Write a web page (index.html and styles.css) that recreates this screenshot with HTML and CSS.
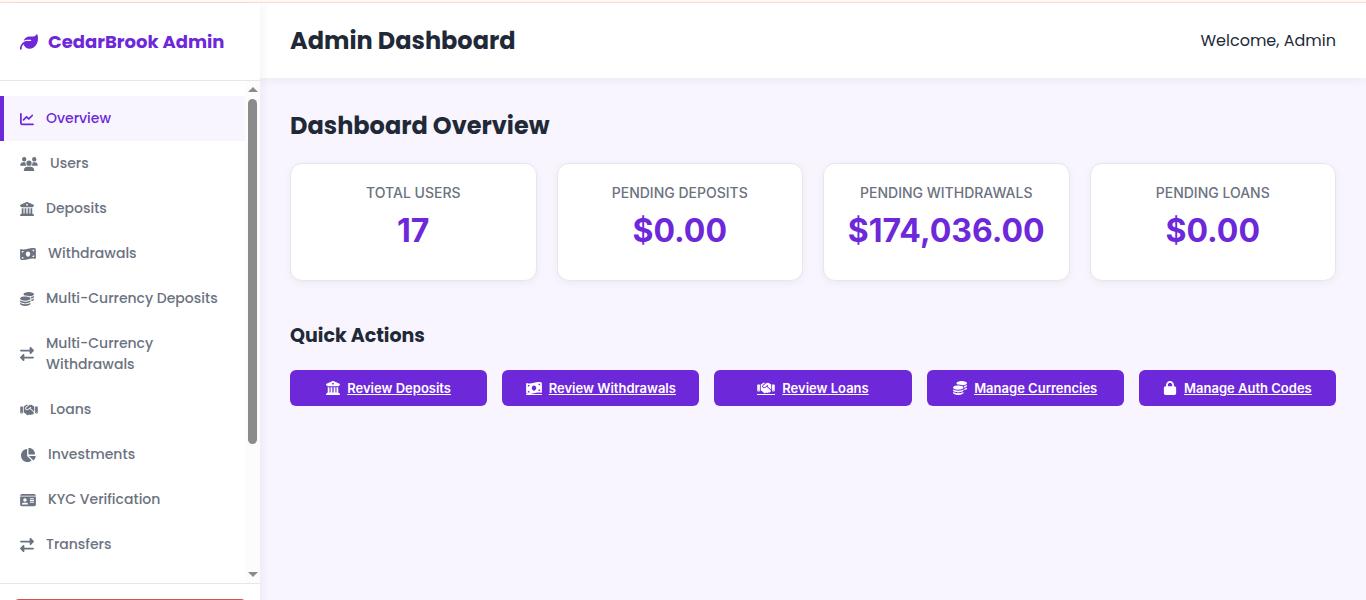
FILE: index.html
```
<!doctype html>
<html lang="en">
  <head>
    <meta charset="utf-8">
    <meta name="viewport" content="width=device-width, initial-scale=1">
    <title>Admin Dashboard - CedarBrook</title>
    <link rel="stylesheet" href="styles.css">
  </head>
  <body>

    <!-- icon sprite -->
    <svg class="sprite" aria-hidden="true">
      <symbol id="leaf" viewBox="0 0 512 512"><path d="M272 96c-78.6 0-145.1 51.5-167.7 122.5c33.6-17 71.5-26.5 111.7-26.5h88c8.8 0 16 7.2 16 16s-7.2 16-16 16H216c-16.6 0-32.7 1.9-48.3 5.4c-25.9 5.9-49.9 16.4-71.4 30.7C38.3 298.8 0 364.9 0 440v16c0 13.3 10.7 24 24 24s24-10.7 24-24V440c0-48.7 20.7-92.5 53.8-123.2C121.6 392.3 190.3 448 272 448l1 0c132.1-.7 239-130.9 239-291.4c0-42.6-7.5-83.1-21.1-119.6c-2.6-6.9-12.7-6.6-16.2-.1C455.9 72.1 418.7 96 376 96L272 96z"/></symbol>
      <symbol id="chart" viewBox="0 0 512 512"><path d="M64 64c0-17.7-14.3-32-32-32S0 46.3 0 64V400c0 44.2 35.8 80 80 80H480c17.7 0 32-14.3 32-32s-14.3-32-32-32H80c-8.8 0-16-7.2-16-16V64zm406.6 86.6c12.5-12.5 12.5-32.8 0-45.3s-32.8-12.5-45.3 0L320 210.7l-57.4-57.4c-12.5-12.5-32.8-12.5-45.3 0l-112 112c-12.5 12.5-12.5 32.8 0 45.3s32.8 12.5 45.3 0L240 221.3l57.4 57.4c12.5 12.5 32.8 12.5 45.3 0l128-128z"/></symbol>
      <symbol id="users" viewBox="0 0 640 512"><path d="M144 0a80 80 0 1 1 0 160A80 80 0 1 1 144 0zM512 0a80 80 0 1 1 0 160A80 80 0 1 1 512 0zM0 298.7C0 239.8 47.8 192 106.7 192h42.7c15.9 0 31 3.5 44.6 9.7c-1.3 7.2-1.9 14.7-1.9 22.3c0 38.2 16.8 72.5 43.3 96H21.3C9.6 320 0 310.4 0 298.7zM405.3 320h-.7c26.6-23.5 43.3-57.8 43.3-96c0-7.6-.7-15-1.9-22.3c13.6-6.3 28.7-9.7 44.6-9.7h42.7C592.2 192 640 239.8 640 298.7c0 11.8-9.6 21.3-21.3 21.3H405.3zM224 224a96 96 0 1 1 192 0 96 96 0 1 1-192 0zM128 485.3C128 411.7 187.7 352 261.3 352H378.7C452.3 352 512 411.7 512 485.3c0 14.7-11.9 26.7-26.7 26.7H154.7c-14.7 0-26.7-11.9-26.7-26.7z"/></symbol>
      <symbol id="bank" viewBox="0 0 512 512"><path d="M243.4 2.6l-224 96c-14 6-21.8 21-18.7 35.8S16.8 160 32 160v8c0 13.3 10.7 24 24 24H456c13.3 0 24-10.7 24-24v-8c15.2 0 28.3-10.7 31.3-25.6s-4.8-29.9-18.7-35.8l-224-96c-8-3.4-17.2-3.4-25.2 0zM128 224H64V420.3c-.6 .3-1.2 .7-1.8 1.1l-48 32c-11.7 7.8-17 22.4-12.9 35.9S17.9 512 32 512H480c14.1 0 26.5-9.2 30.6-22.7s-1.1-28.1-12.9-35.9l-48-32c-.6-.4-1.2-.7-1.8-1.1V224H384V416H344V224H280V416H232V224H168V416H128V224zM256 64a32 32 0 1 1 0 64 32 32 0 1 1 0-64z"/></symbol>
      <symbol id="money" viewBox="0 0 576 512"><path d="M0 112.5V422.3c0 18 10.1 35 27 41.3c87 32.5 174 10.3 261-11.9c79.8-20.3 159.6-40.7 239.3-18.9c23 6.3 48.7-9.5 48.7-33.4V89.7c0-18-10.1-35-27-41.3C462 15.9 375 38.1 288 60.3C208.2 80.6 128.4 100.9 48.7 79.1C25.6 72.8 0 88.6 0 112.5zM288 352c-44.2 0-80-43-80-96s35.8-96 80-96s80 43 80 96s-35.8 96-80 96zM64 352c35.3 0 64 28.7 64 64H64V352zm64-208c0 35.3-28.7 64-64 64V144h64zM512 304v64H448c0-35.3 28.7-64 64-64zM448 96h64v64c-35.3 0-64-28.7-64-64z"/></symbol>
      <symbol id="coins" viewBox="0 0 512 512"><path d="M512 80c0 18-14.3 34.6-38.4 48c-29.1 16.1-72.5 27.5-122.3 30.9c-3.7-1.8-7.4-3.5-11.3-5C300.6 137.4 248.2 128 192 128c-8.3 0-16.4 .2-24.5 .6l-1.1-.6C142.3 114.6 128 98 128 80c0-44.2 86-80 192-80S512 35.8 512 80zM160.7 161.1c10.2-.7 20.7-1.1 31.3-1.1c62.2 0 117.4 12.3 152.5 31.4C369.3 204.9 384 221.7 384 240c0 4-.7 7.9-2.1 11.7c-4.6 13.2-17 25.3-35 35.5c-.4 .2-.9 .5-1.3 .7c-35 19.4-90.8 32-153.6 32c-59.6 0-112.9-11.3-148.2-29.1c-1.9-.9-3.7-1.9-5.5-2.9C14.3 274.6 0 258 0 240c0-34.8 53.4-64.5 128-75.4c10.5-1.5 21.4-2.7 32.7-3.5zM416 240c0-21.9-10.6-39.9-24.1-53.4c28.3-4.4 54.2-11.4 76.2-20.5c16.3-6.8 31.5-15.2 43.9-25.5V176c0 19.3-16.5 37.1-43.8 50.9c-14.6 7.4-32.4 13.7-52.4 18.5c.1-1.8 .2-3.5 .2-5.3zm-32 96c0 18-14.3 34.6-38.4 48c-1.8 1-3.6 1.9-5.5 2.9C304.9 404.7 251.6 416 192 416c-62.8 0-118.6-12.6-153.6-32C14.3 370.6 0 354 0 336V300.6c12.5 10.3 27.6 18.7 43.9 25.5C83.4 342.6 135.8 352 192 352s108.6-9.4 148.1-25.9c7.8-3.2 15.3-6.9 22.4-10.9c6.1-3.4 11.8-7.2 17.2-11.2c1.5-1.1 2.9-2.3 4.3-3.4V336zm32 0V278.1c19-4.2 36.5-9.5 52.1-16c16.3-6.8 31.5-15.2 43.9-25.5V272c0 10.5-5 21-14.9 30.9c-16.3 16.3-45 29.7-81.3 38.4c.1-1.7 .2-3.5 .2-5.3zM192 448c56.2 0 108.6-9.4 148.1-25.9c16.3-6.8 31.5-15.2 43.9-25.5V432c0 44.2-86 80-192 80S0 476.2 0 432V396.6c12.5 10.3 27.6 18.7 43.9 25.5C83.4 438.6 135.8 448 192 448z"/></symbol>
      <symbol id="swap" viewBox="0 0 512 512"><path d="M32 96l320 0V32c0-12.9 7.8-24.6 19.8-29.6s25.7-2.2 34.9 6.9l96 96c6 6 9.4 14.1 9.4 22.6s-3.4 16.6-9.4 22.6l-96 96c-9.2 9.2-22.9 11.9-34.9 6.9s-19.8-16.6-19.8-29.6V160L32 160c-17.7 0-32-14.3-32-32s14.3-32 32-32zM480 352c17.7 0 32 14.3 32 32s-14.3 32-32 32H160v64c0 12.9-7.8 24.6-19.8 29.6s-25.7 2.2-34.9-6.9l-96-96c-6-6-9.4-14.1-9.4-22.6s3.4-16.6 9.4-22.6l96-96c9.2-9.2 22.9-11.9 34.9-6.9s19.8 16.6 19.8 29.6l0 64H480z"/></symbol>
      <symbol id="handshake" viewBox="0 0 640 512"><path d="M323.4 85.2l-96.8 78.4c-16.1 13-19.2 36.4-7 53.1c12.9 17.8 38 21.3 55.3 7.8l99.3-77.2c7-5.4 17-4.2 22.5 2.8s4.2 17-2.8 22.5l-20.9 16.2L512 316.8V128h-.7l-3.9-2.5L434.8 79c-15.3-9.8-33.2-15-51.4-15c-21.8 0-43 7.5-60 21.2zm22.8 124.4l-51.7 40.2C263 274.3 217.3 268 193.7 235.6c-22.2-30.5-16.6-73.1 12.7-96.8l83.2-67.3c-11.6-4.9-24.1-7.4-36.8-7.4C234 64 215.7 69.6 200 80l-72 48V352h28.2l91.4 83.4c19.6 17.9 49.9 16.5 67.8-3.1c5.5-6.1 9.2-13.2 11.1-20.6l17 15.6c19.5 17.9 49.9 16.6 67.8-2.9c4.5-4.9 7.8-10.6 9.9-16.5c19.4 13 45.8 10.3 62.1-7.5c17.9-19.5 16.6-49.9-2.9-67.8l-134.2-123zM16 128c-8.8 0-16 7.2-16 16V352c0 17.7 14.3 32 32 32H64c17.7 0 32-14.3 32-32V128H16zM48 320a16 16 0 1 1 0 32 16 16 0 1 1 0-32zM544 128V352c0 17.7 14.3 32 32 32h32c17.7 0 32-14.3 32-32V144c0-8.8-7.2-16-16-16H544zm32 208a16 16 0 1 1 32 0 16 16 0 1 1-32 0z"/></symbol>
      <symbol id="pie" viewBox="0 0 576 512"><path d="M304 240V16.6c0-9 7-16.6 16-16.6C443.7 0 544 100.3 544 224c0 9-7.6 16-16.6 16H304zM32 272C32 150.7 122.1 50.3 239 34.3c9.2-1.3 17 6.1 17 15.4V288L412.5 444.5c6.7 6.7 6.2 17.7-1.5 23.1C371.8 495.6 323.8 512 272 512C139.5 512 32 404.6 32 272zm526.4 16c9.3 0 16.6 7.8 15.4 17c-7.7 55.9-34.6 105.6-73.9 142.3c-6 5.6-15.4 5.2-21.2-.7L320 288H558.4z"/></symbol>
      <symbol id="idcard" viewBox="0 0 576 512"><path d="M0 96l576 0c0-35.3-28.7-64-64-64H64C28.7 32 0 60.7 0 96zm0 32V416c0 35.3 28.7 64 64 64H512c35.3 0 64-28.7 64-64V128H0zM64 405.3c0-29.5 23.9-53.3 53.3-53.3H234.7c29.5 0 53.3 23.9 53.3 53.3c0 5.9-4.8 10.7-10.7 10.7H74.7c-5.9 0-10.7-4.8-10.7-10.7zM176 192a64 64 0 1 1 0 128 64 64 0 1 1 0-128zm176 16c0-8.8 7.2-16 16-16H496c8.8 0 16 7.2 16 16s-7.2 16-16 16H368c-8.8 0-16-7.2-16-16zm0 64c0-8.8 7.2-16 16-16H496c8.8 0 16 7.2 16 16s-7.2 16-16 16H368c-8.8 0-16-7.2-16-16zm0 64c0-8.8 7.2-16 16-16H496c8.8 0 16 7.2 16 16s-7.2 16-16 16H368c-8.8 0-16-7.2-16-16z"/></symbol>
      <symbol id="lock" viewBox="0 0 448 512"><path d="M144 144v48H304V144c0-44.2-35.8-80-80-80s-80 35.8-80 80zM80 192V144C80 64.5 144.5 0 224 0s144 64.5 144 144v48h16c35.3 0 64 28.7 64 64V448c0 35.3-28.7 64-64 64H64c-35.3 0-64-28.7-64-64V256c0-35.3 28.7-64 64-64H80z"/></symbol>
    </svg>

    <div class="layout">
      <aside class="sidebar">
        <div class="brand">
          <svg class="icon brand-icon"><use href="#leaf"/></svg>
          <span>CedarBrook Admin</span>
        </div>
        <div class="nav-wrap">
          <nav class="nav">
            <a class="active" href="#overview"><svg class="icon"><use href="#chart"/></svg>Overview</a>
            <a href="#users"><svg class="icon w20"><use href="#users"/></svg>Users</a>
            <a href="#deposits"><svg class="icon"><use href="#bank"/></svg>Deposits</a>
            <a href="#withdrawals"><svg class="icon w18"><use href="#money"/></svg>Withdrawals</a>
            <a href="#mc-deposits"><svg class="icon"><use href="#coins"/></svg>Multi-Currency Deposits</a>
            <a href="#mc-withdrawals"><svg class="icon"><use href="#swap"/></svg>Multi-Currency Withdrawals</a>
            <a href="#loans"><svg class="icon w20"><use href="#handshake"/></svg>Loans</a>
            <a href="#investments"><svg class="icon w18"><use href="#pie"/></svg>Investments</a>
            <a href="#kyc"><svg class="icon w18"><use href="#idcard"/></svg>KYC Verification</a>
            <a href="#transfers"><svg class="icon"><use href="#swap"/></svg>Transfers</a>
            <a href="#auth-codes" aria-label="Auth Codes"><svg class="icon"><use href="#lock"/></svg></a>
          </nav>
          <div class="scrollbar" aria-hidden="true">
            <i class="arrow up"></i>
            <div class="track"><div class="thumb"></div></div>
            <i class="arrow down"></i>
          </div>
        </div>
        <div class="sidebar-footer">
          <button class="logout" type="button" aria-label="Logout"></button>
        </div>
      </aside>

      <main class="main">
        <header class="topbar">
          <h1>Admin Dashboard</h1>
          <span class="welcome">Welcome, Admin</span>
        </header>

        <section class="content">
          <h2>Dashboard Overview</h2>
          <div class="stats">
            <div class="card"><h3>Total Users</h3><p>17</p></div>
            <div class="card"><h3>Pending Deposits</h3><p>$0.00</p></div>
            <div class="card"><h3>Pending Withdrawals</h3><p>$174,036.00</p></div>
            <div class="card"><h3>Pending Loans</h3><p>$0.00</p></div>
          </div>

          <h2 class="sub">Quick Actions</h2>
          <div class="actions">
            <a class="btn" href="#deposits"><svg class="icon"><use href="#bank"/></svg><span>Review Deposits</span></a>
            <a class="btn" href="#withdrawals"><svg class="icon w18 lined"><use href="#money"/></svg><span>Review Withdrawals</span></a>
            <a class="btn" href="#loans"><svg class="icon w20 lined"><use href="#handshake"/></svg><span>Review Loans</span></a>
            <a class="btn" href="#currencies"><svg class="icon"><use href="#coins"/></svg><span>Manage Currencies</span></a>
            <a class="btn" href="#auth-codes"><svg class="icon"><use href="#lock"/></svg><span>Manage Auth Codes</span></a>
          </div>
        </section>
      </main>
    </div>

  </body>
</html>
```
FILE: styles.css
```
:root {
  --purple: #6d28d9;
  --ink: #1f2937;
  --muted: #6b7280;
  --line: #e5e7eb;
  --bg: #f8f5ff;
}
* {
  margin: 0;
  padding: 0;
  box-sizing: border-box;
}
body {
  height: 100vh;
  overflow: hidden;
  border-top: 2px solid #fff8f3;
  font-family: Poppins, Inter, sans-serif;
  color: var(--ink);
  background: var(--bg);
}
.sprite {
  display: none;
}
.icon {
  flex: none;
  width: 14px;
  height: 14px;
  fill: currentColor;
}
.icon.w18 {
  width: 16px;
}
.icon.w20 {
  width: 18px;
}
.layout {
  display: grid;
  grid-template-columns: 260px 1fr;
  height: 100%;
  border-top: 1px solid #fadfd0;
}

/* sidebar */
.sidebar {
  z-index: 1;
  display: flex;
  flex-direction: column;
  background: #fff;
  box-shadow: 2px 0 10px rgba(0, 0, 0, .05);
}
.brand {
  display: flex;
  flex: none;
  align-items: center;
  gap: 10px;
  height: 78px;
  padding: 0 20px;
  border-bottom: 1px solid var(--line);
  font-size: 18px;
  font-weight: 700;
  color: var(--purple);
}
.icon.brand-icon {
  width: 18px;
  height: 18px;
}
.nav-wrap {
  display: flex;
  flex: none;
  height: calc(100vh - 98px);
}
.nav {
  flex: 1;
  padding: 15px 0;
  overflow-y: auto;
  scrollbar-width: none;
}
.nav a {
  display: flex;
  align-items: center;
  gap: 12px;
  min-height: 45px;
  padding: 12px 20px;
  font-size: 14px;
  font-weight: 500;
  line-height: 21px;
  color: var(--muted);
  text-decoration: none;
}
.nav a.active {
  padding-left: 16px;
  border-left: 4px solid var(--purple);
  color: var(--purple);
  background: var(--bg);
}
.scrollbar {
  display: flex;
  flex-direction: column;
  align-items: center;
  width: 15px;
  padding: 6px 0;
  background: #fcfcfc;
}
.track {
  flex: 1;
  width: 9px;
  margin: 7px 0;
}
.thumb {
  height: 74%;
  border-radius: 5px;
  background: #8b8b8b;
}
.arrow {
  border: 5px solid transparent;
}
.arrow.up {
  border-top: 0;
  border-bottom-color: #8b8b8b;
}
.arrow.down {
  border-bottom: 0;
  border-top-color: #8b8b8b;
}
.sidebar-footer {
  flex: none;
  padding: 15px;
  border-top: 1px solid var(--line);
}
.logout {
  display: block;
  width: 100%;
  height: 40px;
  border: 0;
  border-radius: 4px;
  background: #dc4c4c;
}

/* main column */
.topbar {
  display: flex;
  align-items: center;
  justify-content: space-between;
  height: 75px;
  padding: 0 30px;
  background: #fff;
  box-shadow: 0 2px 10px rgba(0, 0, 0, .05);
}
h1, h2 {
  font-size: 24px;
  font-weight: 700;
  line-height: 36px;
}
.content {
  padding: 30px;
}
.stats {
  display: grid;
  grid-template-columns: repeat(4, 1fr);
  gap: 20px;
  margin: 19px 0 40px;
}
.card {
  height: 118px;
  padding: 20px;
  border: 1px solid var(--line);
  border-radius: 12px;
  background: #fff;
  box-shadow: 0 2px 8px rgba(0, 0, 0, .05);
  font-family: Inter, sans-serif;
  text-align: center;
}
.card h3 {
  margin-bottom: 8px;
  font-size: 14px;
  font-weight: 500;
  line-height: 17px;
  color: var(--muted);
  text-transform: uppercase;
}
.card p {
  font-size: 32px;
  font-weight: 700;
  line-height: 44px;
  color: var(--purple);
}
h2.sub {
  font-size: 19px;
  line-height: 30px;
}
.actions {
  display: grid;
  grid-template-columns: repeat(5, 1fr);
  gap: 15px;
  margin-top: 19px;
}
.btn {
  display: flex;
  align-items: center;
  justify-content: center;
  gap: 7px;
  height: 36px;
  border-radius: 6px;
  font: 600 13px Inter, sans-serif;
  color: #fff;
  background: var(--purple);
  text-decoration: none;
}
.btn span {
  text-decoration: underline;
}
/* wide glyphs carry the underline too */
.lined {
  box-shadow: inset 0 -1px currentColor;
}
```
